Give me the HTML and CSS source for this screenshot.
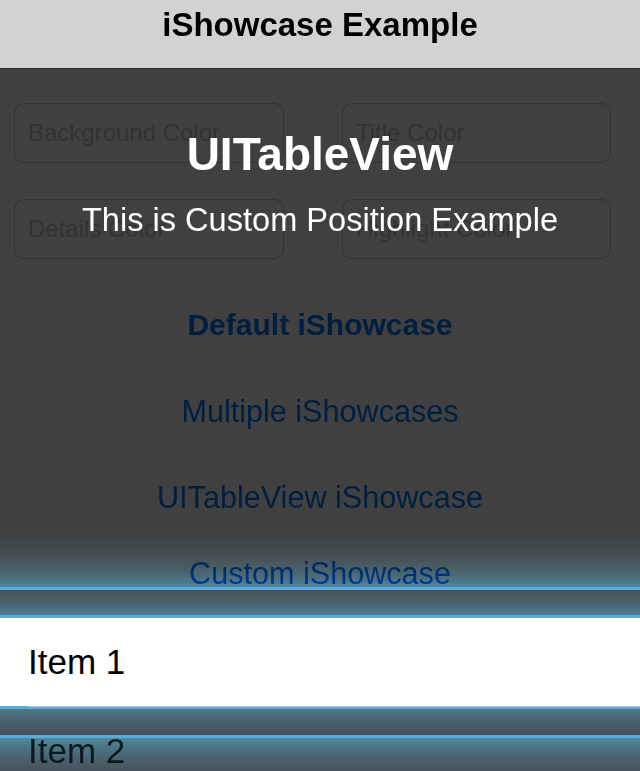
FILE: index.html
```html
<!DOCTYPE html>
<html lang="en">
<head>
<meta charset="utf-8">
<title>iShowcase Example</title>
<link rel="stylesheet" href="styles.css">
</head>
<body>
<div class="screen">
  <header class="navbar"><h1 class="navbar-title">iShowcase Example</h1></header>
  <main class="content">
    <div class="fields">
      <div class="field"><span class="placeholder">Background Color</span></div>
      <div class="field"><span class="placeholder">Title Color</span></div>
      <div class="field"><span class="placeholder">Details Color</span></div>
      <div class="field"><span class="placeholder">Highlight Color</span></div>
    </div>
    <div class="actions">
      <button class="action action-bold">Default iShowcase</button>
      <button class="action">Multiple iShowcases</button>
      <button class="action">UITableView iShowcase</button>
      <button class="action action-short">Custom iShowcase</button>
    </div>
    <ul class="table">
      <li class="row row-highlighted">Item 1</li>
      <li class="row row-under">Item 2</li>
    </ul>
  </main>
  <div class="showcase">
    <div class="showcase-text">
      <h2 class="showcase-title">UITableView</h2>
      <p class="showcase-detail">This is Custom Position Example</p>
    </div>
  </div>
  <div class="glow">
    <div class="glow-fade"></div>
    <div class="glow-line"></div>
    <div class="glow-band glow-band-up"></div>
    <div class="glow-line"></div>
    <div class="glow-hole"></div>
    <div class="glow-line"></div>
    <div class="glow-band glow-band-down"></div>
    <div class="glow-line"></div>
    <div class="glow-band glow-band-last"></div>
  </div>
</div>
</body>
</html>
```

FILE: styles.css
```css
* { box-sizing: border-box; }

html, body {
  margin: 0;
  padding: 0;
}

body {
  width: 640px;
  height: 771px;
  overflow: hidden;
  background: #ffffff;
  font-family: "Liberation Sans", Arial, Helvetica, sans-serif;
}

.screen {
  position: relative;
  width: 640px;
  height: 771px;
  overflow: hidden;
  background: #ffffff;
}

.navbar {
  height: 69px;
  background: #d2d2d2;
  border-bottom: 1px solid #b0b0b0;
  display: flex;
  justify-content: center;
}

.navbar-title {
  margin: 0;
  font-size: 33px;
  line-height: 50px;
  font-weight: bold;
  color: #000000;
}

.fields {
  display: grid;
  grid-template-columns: 270px 269px;
  column-gap: 58px;
  row-gap: 36px;
  padding: 34px 0 0 14px;
}

.field {
  height: 60px;
  border: 1px solid #c4c4c4;
  border-radius: 10px;
  padding-left: 13px;
  display: flex;
  align-items: center;
}

.placeholder {
  font-size: 24px;
  color: #c6c6cc;
}

.actions {
  display: flex;
  flex-direction: column;
  padding-top: 23px;
}

.action {
  height: 86px;
  margin: 0;
  padding: 0;
  border: 0;
  background: none;
  font-family: inherit;
  font-size: 30.6px;
  color: #007aff;
  text-align: center;
}

.action-bold {
  font-weight: bold;
  font-size: 30px;
}

.action-short { height: 66px; }

.table {
  list-style: none;
  margin: 12px 0 0 0;
  padding: 0;
}

.row {
  height: 89px;
  padding-left: 28px;
  padding-bottom: 1px;
  display: flex;
  align-items: center;
  font-size: 35px;
  color: #000000;
  background:
    linear-gradient(#c4c4c8, #c4c4c8) 28px 100% / calc(100% - 28px) 1px no-repeat,
    linear-gradient(#ffffff, #ffffff) 0 0 / 100% 88px no-repeat;
}

.row-highlighted {
  position: relative;
  z-index: 2;
}

.row-under {
  color: #2e3a3e;
}

.showcase {
  position: absolute;
  top: 68px;
  left: 0;
  right: 0;
  bottom: 0;
  z-index: 1;
  background: rgba(0, 0, 0, 0.75);
}

.showcase-text {
  display: flex;
  flex-direction: column;
  align-items: center;
  padding-top: 59px;
  color: #ffffff;
}

.showcase-title {
  margin: 0;
  font-size: 46px;
  line-height: 54px;
  font-weight: bold;
}

.showcase-detail {
  margin: 19px 0 0 0;
  font-size: 32.6px;
  line-height: 40px;
}

.glow {
  position: absolute;
  top: 530px;
  left: 0;
  right: 0;
  bottom: 0;
  z-index: 1;
  mix-blend-mode: color-dodge;
  display: flex;
  flex-direction: column;
}

.glow-fade {
  height: 57px;
  flex: none;
  background: linear-gradient(#000000, rgb(18, 48, 60) 45%, rgb(50, 132, 152));
}

.glow-line {
  height: 3px;
  flex: none;
  background: rgb(67, 160, 180);
}

.glow-band { flex: none; }

.glow-band-up {
  height: 25px;
  background: linear-gradient(rgb(22, 56, 70), rgb(44, 122, 142));
}

.glow-hole {
  height: 88px;
  flex: none;
}

.glow-band-down {
  height: 26px;
  background: linear-gradient(rgb(40, 119, 138), rgb(22, 51, 74));
}

.glow-band-last {
  flex: 1;
  background: linear-gradient(rgb(46, 137, 153), rgb(22, 60, 80));
}
```
